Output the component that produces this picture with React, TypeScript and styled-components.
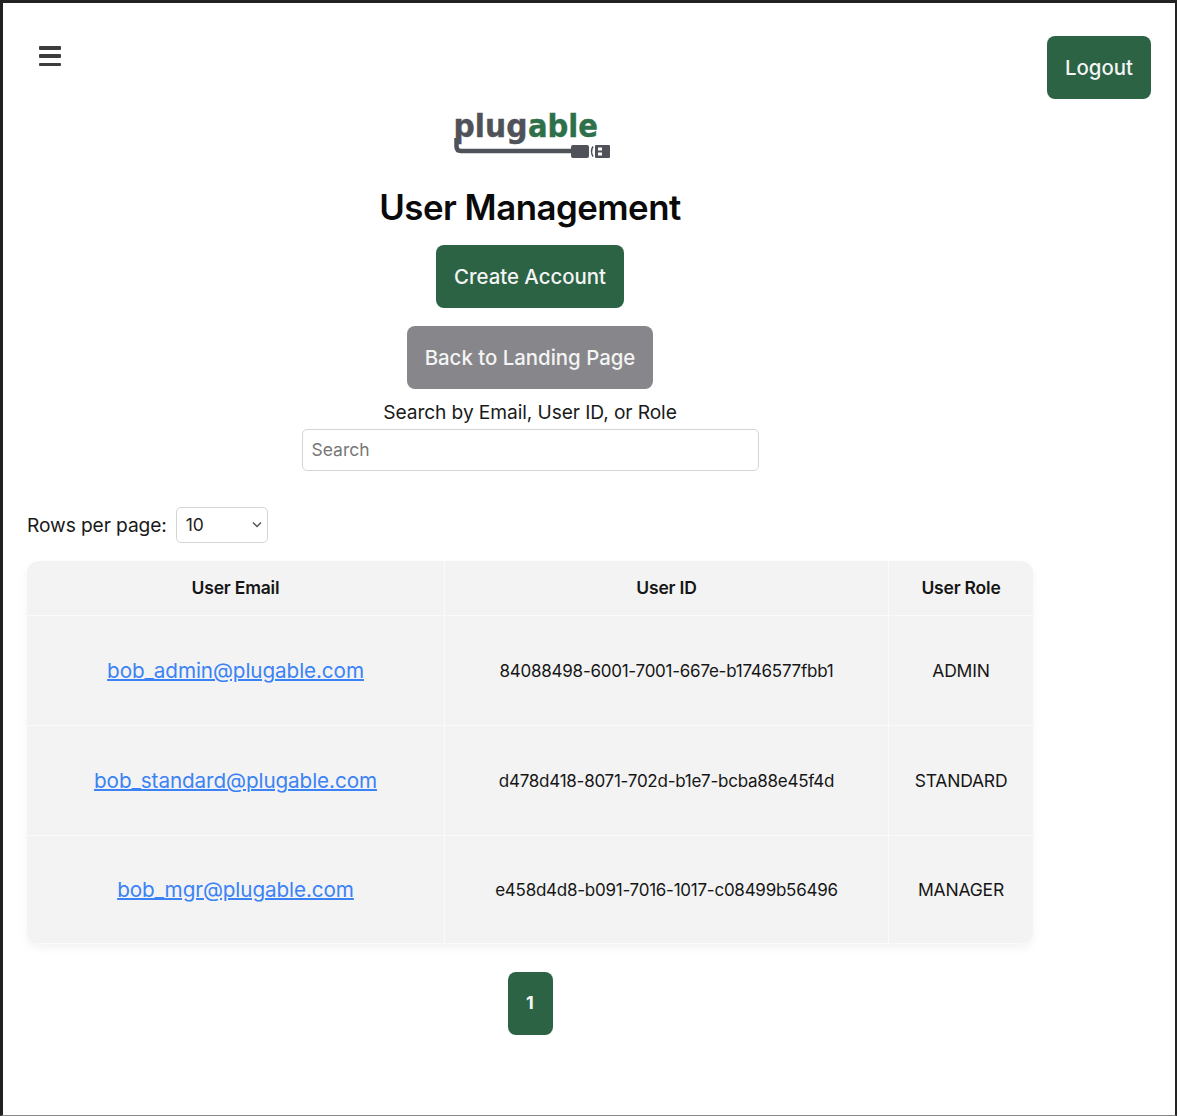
import React from "react";
import styled, { createGlobalStyle } from "styled-components";

const Global = createGlobalStyle`
  html, body { margin: 0; padding: 0; background: #fff; }
  body { font-family: "Inter", "Liberation Sans", sans-serif; color: #1a1a1a; }
  * { box-sizing: border-box; }
`;

const Frame = styled.div`
  width: 1177px;
  height: 1116px;
  overflow: hidden;
  border-style: solid;
  border-color: #222 #222 #888 #222;
  border-width: 3px 2px 1px 3px;
  padding: 33px 24px 0 24px;
`;
const TopBar = styled.header`
  display: flex;
  justify-content: space-between;
  align-items: flex-start;
  height: 63px;
`;
const Burger = styled.button`
  border: 0;
  background: none;
  padding: 0;
  margin: 10px 0 0 12px;
  width: 22px;
  height: 20px;
  display: flex;
  flex-direction: column;
  justify-content: space-between;
  span { display: block; height: 3.5px; border-radius: 1px; background: #3d3d3d; }
`;
const Button = styled.button<{ $tone?: "green" | "gray" }>`
  border: 0;
  height: 63px;
  padding: 0 18px;
  border-radius: 8px;
  background: ${(p) => (p.$tone === "gray" ? "#87878b" : "#2b6344")};
  color: #f4f4f4;
  font-family: inherit;
  font-size: 20.4px;
  font-weight: 500;
`;
const Main = styled.main`
  width: 1006px;
  display: flex;
  flex-direction: column;
  align-items: center;
`;
const Logo = styled.svg`
  display: block;
  margin: 9px 0 0 3px;
`;
const Title = styled.h1`
  margin: 21px 0 0;
  height: 48px;
  line-height: 48px;
  font-size: 34.8px;
  font-weight: 600;
  color: #0a0a0a;
  letter-spacing: -0.5px;
`;
const Stack = styled.div`
  margin-top: 14px;
  display: flex;
  flex-direction: column;
  align-items: center;
  gap: 18px;
`;
const SearchLabel = styled.label`
  margin-top: 11px;
  margin-bottom: 1px;
  font-size: 19.2px;
  line-height: 24px;
  letter-spacing: -0.1px;
`;
const SearchInput = styled.input`
  margin-top: 4px;
  width: 457px;
  height: 42px;
  padding: 0 9px 2px;
  border: 1.5px solid #d5d5d5;
  border-radius: 5px;
  font-family: inherit;
  font-size: 17.5px;
  &::placeholder { color: #777; }
`;
const RowsBar = styled.div`
  align-self: flex-start;
  margin-top: 36px;
  height: 36px;
  display: flex;
  align-items: center;
  gap: 9px;
  font-size: 19.2px;
  letter-spacing: -0.1px;
`;
const Select = styled.div`
  width: 92px;
  height: 36px;
  border: 1.5px solid #d5d5d5;
  border-radius: 5px;
  display: flex;
  align-items: center;
  justify-content: space-between;
  padding: 0 3px 2px 9px;
  font-size: 17.5px;
  color: #222;
`;
const Table = styled.div`
  margin-top: 18px;
  width: 1006px;
  height: 383px;
  display: grid;
  grid-template-columns: 418px 444px 144px;
  grid-template-rows: 55px 110px 110px 108px;
  background: #f3f3f3;
  border-radius: 12px;
  overflow: hidden;
  box-shadow: 0 4px 10px rgba(0, 0, 0, 0.05);
`;
const Cell = styled.div<{ $head?: boolean; $last?: boolean; $id?: boolean }>`
  display: flex;
  align-items: center;
  justify-content: center;
  padding-bottom: ${(p) => (p.$head ? "2px" : "0")};
  font-size: ${(p) => (p.$id ? "17px" : "17.5px")};
  font-weight: ${(p) => (p.$head ? 600 : 400)};
  border-right: ${(p) => (p.$last ? "0" : "1px solid #fafafa")};
  border-bottom: 1px solid #fafafa;
  letter-spacing: ${(p) => (p.$id ? "-0.25px" : "-0.2px")};
  color: #161616;
  white-space: nowrap;
`;
const EmailLink = styled.a`
  color: #3b82f6;
  font-size: 20.7px;
  text-decoration: underline;
  text-decoration-thickness: 1.5px;
  letter-spacing: -0.1px;
`;
const PageButton = styled(Button)`
  margin-top: 28px;
  width: 45px;
  padding: 0 0 2px;
  font-weight: 700;
  font-size: 18px;
`;

const users = [
  { email: "bob_admin@plugable.com", id: "84088498-6001-7001-667e-b1746577fbb1", role: "ADMIN" },
  { email: "bob_standard@plugable.com", id: "d478d418-8071-702d-b1e7-bcba88e45f4d", role: "STANDARD" },
  { email: "bob_mgr@plugable.com", id: "e458d4d8-b091-7016-1017-c08499b56496", role: "MANAGER" },
];

export default function App() {
  return (
    <>
      <Global />
      <Frame>
        <TopBar>
          <Burger aria-label="Menu">
            <span />
            <span />
            <span />
          </Burger>
          <Button>Logout</Button>
        </TopBar>
        <Main>
          <Logo width="160" height="54" viewBox="0 0 160 54">
            <text x="1.5" y="29" fontFamily="DejaVu Sans" fontWeight="700" fontSize="31.5" fill="#4f5359" stroke="#4f5359" strokeWidth="0.4" textLength="74" lengthAdjust="spacingAndGlyphs">plug</text>
            <text x="76" y="29" fontFamily="DejaVu Sans" fontWeight="700" fontSize="31.5" fill="#2d7049" stroke="#2d7049" strokeWidth="0.4" textLength="70" lengthAdjust="spacingAndGlyphs">able</text>
            <path d="M4.5 30 V38.5 Q4.5 43 9 43 H122" fill="none" stroke="#4f5359" strokeWidth="4.5" />
            <rect x="119" y="37" width="18" height="13" rx="2" fill="#4f5359" />
            <path d="M141 38.5 Q138 43.5 141 48.5" fill="none" stroke="#4f5359" strokeWidth="1.5" />
            <rect x="143" y="37" width="15" height="13" rx="1" fill="#4f5359" />
            <rect x="146" y="39.5" width="4" height="3" fill="#fff" />
            <rect x="146" y="44.5" width="4" height="3" fill="#fff" />
          </Logo>
          <Title>User Management</Title>
          <Stack>
            <Button>Create Account</Button>
            <Button $tone="gray">Back to Landing Page</Button>
          </Stack>
          <SearchLabel>Search by Email, User ID, or Role</SearchLabel>
          <SearchInput placeholder="Search" />
          <RowsBar>
            Rows per page:
            <Select>
              10
              <svg width="14" height="14" viewBox="0 0 14 14">
                <path d="M3 5.5 L7 9.5 L11 5.5" fill="none" stroke="#555" strokeWidth="1.5" />
              </svg>
            </Select>
          </RowsBar>
          <Table>
            <Cell $head>User Email</Cell>
            <Cell $head>User ID</Cell>
            <Cell $head $last>User Role</Cell>
            {users.map((u) => (
              <React.Fragment key={u.id}>
                <Cell><EmailLink href="#">{u.email}</EmailLink></Cell>
                <Cell $id>{u.id}</Cell>
                <Cell $last>{u.role}</Cell>
              </React.Fragment>
            ))}
          </Table>
          <PageButton>1</PageButton>
        </Main>
      </Frame>
    </>
  );
}
